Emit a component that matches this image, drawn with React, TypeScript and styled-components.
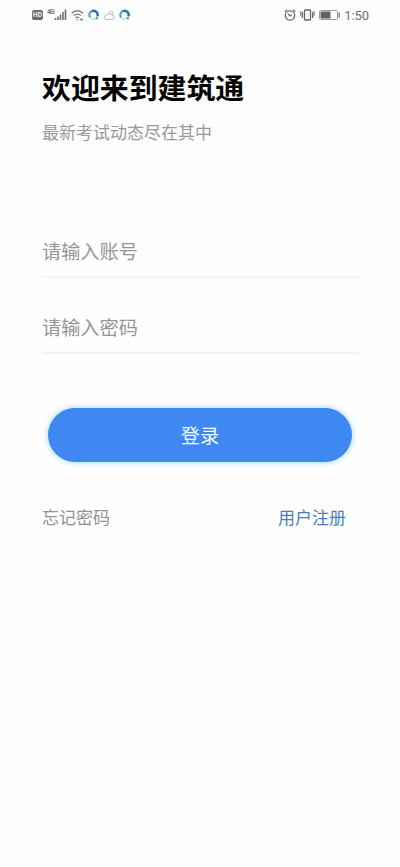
import React from "react";
import styled, { createGlobalStyle } from "styled-components";

const GlobalStyle = createGlobalStyle`
  * { box-sizing: border-box; }
  body {
    margin: 0;
    background: #fefefe;
    font-family: "Noto Sans CJK SC", "Noto Sans", sans-serif;
  }
`;

const Screen = styled.div`
  width: 400px;
  height: 867px;
  display: flex;
  flex-direction: column;
  background: #fefefe;
`;

const StatusBar = styled.header`
  height: 30px;
  padding: 0 31px 0 32px;
  display: flex;
  align-items: center;
  justify-content: space-between;
`;

const StatusGroup = styled.div<{ $gap: number }>`
  display: flex;
  align-items: center;
  gap: ${(p) => p.$gap}px;
  svg { display: block; flex: none; }
`;

const HdBadge = styled.span`
  width: 11px;
  height: 10px;
  border-radius: 2px;
  background: #6a6a6a;
  color: #f0f0f0;
  font: 700 7px/10px Roboto, sans-serif;
  text-align: center;
`;

const Network = styled.span`
  width: 7px;
  height: 12px;
  margin-right: -4px;
  color: #777;
  font: 700 7px/7px Roboto, sans-serif;
  letter-spacing: -1px;
`;

const Clock = styled.time`
  margin-top: 1px;
  color: #707070;
  font: 400 13px/16px Roboto, sans-serif;
  letter-spacing: -0.1px;
`;

const Content = styled.main`
  padding: 35px 42px 0;
  display: flex;
  flex-direction: column;
`;

const Title = styled.h1`
  margin: 0;
  color: #050505;
  font-size: 28.9px;
  line-height: 42px;
  font-weight: 700;
  white-space: nowrap;
`;

const Subtitle = styled.p`
  margin: 13px 0 81px;
  color: #999;
  font-size: 17px;
  line-height: 24px;
`;

const Field = styled.input`
  width: 317px;
  height: 53px;
  margin-bottom: 23px;
  padding: 0;
  border: 0;
  border-bottom: 2px solid #f3f3f3;
  outline: 0;
  background: transparent;
  color: #333;
  font-family: inherit;
  font-size: 19.2px;
  &::placeholder { color: #959595; opacity: 1; }
`;

const LoginButton = styled.button`
  height: 54px;
  margin: 31px 6px 0;
  padding: 1px 0 0;
  border: 0;
  border-radius: 27px;
  background: #3f88f2;
  box-shadow: 0 0 6px rgba(80, 175, 255, 0.6);
  color: #f5faff;
  font-family: inherit;
  font-size: 19.2px;
  line-height: 53px;
`;

const Links = styled.nav`
  margin-top: 43px;
  padding-right: 12px;
  display: flex;
  justify-content: space-between;
`;

const TextLink = styled.a<{ $accent?: boolean }>`
  color: ${(p) => (p.$accent ? "#4480bd" : "#929292")};
  font-size: 17px;
  line-height: 24px;
`;

const Signal = () => (
  <svg width="13" height="12" viewBox="0 0 12 12" stroke="#6c6c6c" strokeWidth="1.6">
    <path d="M1 11V9M3.5 11V7.5M6 11V5.5M8.5 11V3M11 11V0.5" />
  </svg>
);

const Wifi = () => (
  <svg width="13" height="12" viewBox="0 0 13 12" fill="none" stroke="#777" strokeWidth="1.3">
    <path d="M.7 4.3Q6.2-.7 12 4.3M2.6 6.6Q6.2 3.5 10 6.6M4.4 8.8Q6.2 7.3 8 8.8" />
    <path d="M5.5 10.6H7M9 10.5h3" />
  </svg>
);

const Swirl = () => (
  <svg width="11" height="12" viewBox="0 0 12 12" fill="none">
    <circle cx="6" cy="6" r="4.4" stroke="#b8e3f7" strokeWidth="2" />
    <path d="M2.3 8.6C.2 4.8 2.7 1.3 6 1.3c3.5 0 5.1 3 4.5 5.7" stroke="#5aa5d0" strokeWidth="2.4" />
    <path d="M4 1.9c3.5-1.5 7.3 1.3 6.5 5.1" stroke="#2875a8" strokeWidth="2.4" />
    <path d="M8 10.2l2.8.7-.5-3.8z" fill="#3c89b8" />
    <circle cx="5.6" cy="6.8" r="2.5" fill="#fff" />
  </svg>
);

const Cloud = () => (
  <svg width="12" height="11" viewBox="0 0 12 11" fill="none" stroke="#b8b8b8" strokeWidth="1">
    <path d="M3.2 9.5h5.6a2.1 2.1 0 0 0 .3-4.2A3 3 0 0 0 3.6 5a2.3 2.3 0 0 0-.4 4.5z" />
    <path d="M6 2.6c.6-2 4-1.8 4.3.2.1 1-.3 1.7-1 2.2" />
  </svg>
);

const Alarm = () => (
  <svg width="12" height="12" viewBox="0 0 12 12" fill="none" stroke="#666" strokeWidth="1.2">
    <circle cx="6" cy="6.5" r="4.7" />
    <path d="M.6 2.6L3 .7M9 .7l2.4 1.9M3.9 4.7L6 7l2-1" />
  </svg>
);

const Vibrate = () => (
  <svg width="15" height="12" viewBox="0 0 15 12" fill="none" stroke="#666" strokeWidth="1.3">
    <rect x="4.5" y="1" width="6" height="10" rx=".8" />
    <path d="M2.4 3v6M12.6 3v6" />
    <path d="M.8 2v5M14.2 2v5" strokeWidth=".9" />
  </svg>
);

const Battery = () => (
  <svg width="21" height="10" viewBox="0 0 21 10">
    <rect x=".5" y=".5" width="18" height="9" rx="1" fill="none" stroke="#999" />
    <path d="M1.5 1.5h10v7h-10z" fill="#626262" />
    <path d="M20.2 2.5v5" stroke="#777" strokeWidth="1.3" />
  </svg>
);

export default function App() {
  return (
    <Screen>
      <GlobalStyle />
      <StatusBar>
        <StatusGroup $gap={4}>
          <HdBadge>HD</HdBadge>
          <Network>4G</Network>
          <Signal />
          <Wifi />
          <Swirl />
          <Cloud />
          <Swirl />
        </StatusGroup>
        <StatusGroup $gap={4}>
          <Alarm />
          <Vibrate />
          <Battery />
          <Clock>1:50</Clock>
        </StatusGroup>
      </StatusBar>
      <Content>
        <Title>欢迎来到建筑通</Title>
        <Subtitle>最新考试动态尽在其中</Subtitle>
        <Field type="text" placeholder="请输入账号" />
        <Field type="password" placeholder="请输入密码" />
        <LoginButton type="button">登录</LoginButton>
        <Links>
          <TextLink>忘记密码</TextLink>
          <TextLink $accent>用户注册</TextLink>
        </Links>
      </Content>
    </Screen>
  );
}
